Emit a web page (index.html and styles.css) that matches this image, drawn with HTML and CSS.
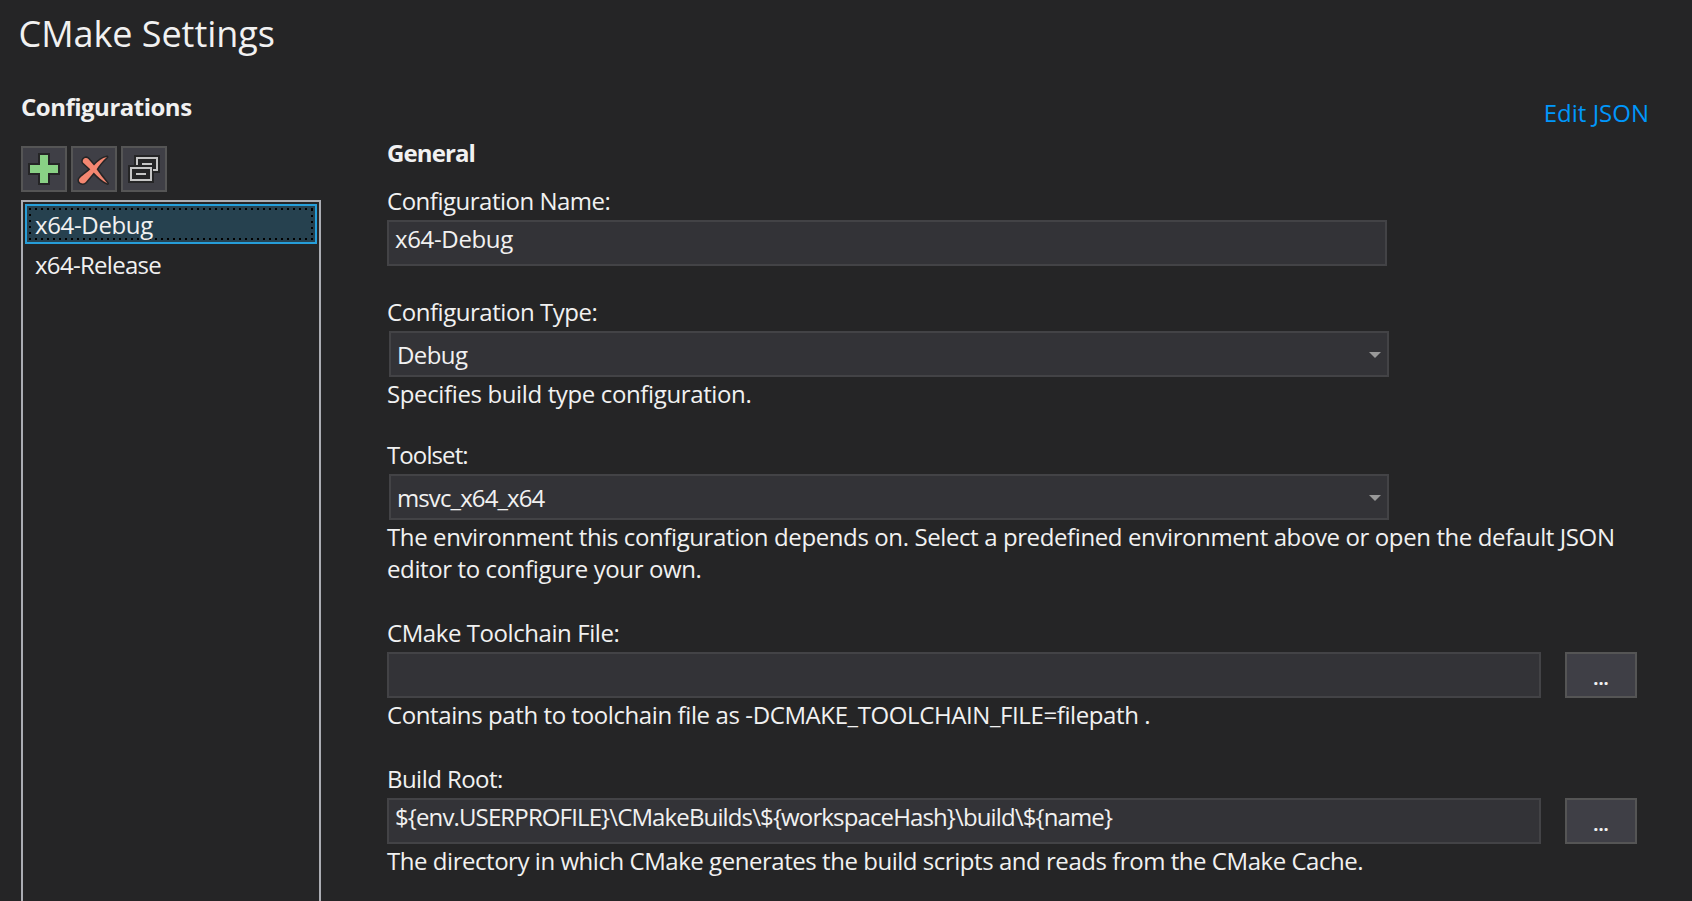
FILE: index.html
```html
<!DOCTYPE html>
<html lang="en">
<head>
<meta charset="utf-8">
<title>CMake Settings</title>
<link rel="stylesheet" href="styles.css">
</head>
<body>
<h1 class="title">CMake Settings</h1>
<div class="layout">
  <aside class="sidebar">
    <h2 class="heading heading-configs">Configurations</h2>
    <div class="toolbar">
      <button class="tool" aria-label="Add">
        <svg width="42" height="42" viewBox="0 0 42 42"><path d="M15 5h12v10h10v12H27v10H15V27H5V15h10z" fill="#252526"/><path d="M17 7h8v10h10v8H25v10h-8V25H7v-8h10z" fill="#89d185"/></svg>
      </button>
      <button class="tool" aria-label="Remove">
        <svg width="42" height="42" viewBox="0 0 42 42"><path d="M10 14.500C8.800 11 13 8.300 15.600 11.200L21 17.600C25 13.200 29 9.800 34 9C29.500 13 26 17.500 23.600 21.200C26.500 25.500 30.500 30.500 34.500 35.500C29 33 24.500 28.500 20.800 24.600L12.600 34.200C9.500 37 5 34.500 6.200 31C8 28 13.500 25 17.300 21.200Z" fill="#f48771" stroke="#252526" stroke-width="3" paint-order="stroke" stroke-linejoin="round"/></svg>
      </button>
      <button class="tool" aria-label="Duplicate">
        <svg width="42" height="42" viewBox="0 0 42 42" shape-rendering="crispEdges"><path d="M11 7h26v18h-6v10H5V17h6z" fill="#252526"/><path d="M14 17v-7h20v12h-4" fill="none" stroke="#c5c5c5" stroke-width="2"/><path d="M19 16h10" stroke="#c5c5c5" stroke-width="2"/><path d="M8 20h20v12H8z" fill="#252526" stroke="#c5c5c5" stroke-width="2"/><path d="M13 26h10" stroke="#c5c5c5" stroke-width="2"/></svg>
      </button>
    </div>
    <ul class="list">
      <li class="item item-selected">
        <svg class="focus" width="284" height="32" viewBox="0 0 284 32" shape-rendering="crispEdges"><path d="M0 1H284M0 31H284" stroke="#000" stroke-width="2" stroke-dasharray="2 4"/><path d="M1 6V30M283 1V30" stroke="#000" stroke-width="2" stroke-dasharray="2 4"/></svg>
        <span class="t-debug">x64-Debug</span>
      </li>
      <li class="item"><span class="t-release">x64-Release</span></li>
    </ul>
  </aside>
  <main class="main">
    <div class="actions"><a class="link">Edit JSON</a></div>
    <h2 class="heading heading-general">General</h2>
    <section class="field">
      <label class="label t-name">Configuration Name:</label>
      <div class="input input-short"><span class="t-debug">x64-Debug</span></div>
    </section>
    <section class="field field-type">
      <label class="label t-type">Configuration Type:</label>
      <div class="combo"><span class="t-value">Debug</span><svg width="12" height="6" viewBox="0 0 12 6"><path d="M0 0h12L6 6z" fill="#999"/></svg></div>
      <p class="hint t-spec">Specifies build type configuration.</p>
    </section>
    <section class="field field-toolset">
      <label class="label t-toolset">Toolset:</label>
      <div class="combo"><span class="t-msvc">msvc_x64_x64</span><svg width="12" height="6" viewBox="0 0 12 6"><path d="M0 0h12L6 6z" fill="#999"/></svg></div>
      <p class="hint t-env">The environment this configuration depends on. Select a predefined environment above or open the default JSON<br>editor to configure your own.</p>
    </section>
    <section class="field field-toolchain">
      <label class="label t-chain">CMake Toolchain File:</label>
      <div class="row"><div class="input input-long"></div><button class="browse">...</button></div>
      <p class="hint t-contains">Contains path to toolchain file as -DCMAKE_TOOLCHAIN_FILE=filepath .</p>
    </section>
    <section class="field field-root">
      <label class="label t-root">Build Root:</label>
      <div class="row"><div class="input input-long"><span class="t-path">${env.USERPROFILE}\CMakeBuilds\${workspaceHash}\build\${name}</span></div><button class="browse">...</button></div>
      <p class="hint t-dir">The directory in which CMake generates the build scripts and reads from the CMake Cache.</p>
    </section>
  </main>
</div>
</body>
</html>
```
FILE: styles.css
```css
* { box-sizing: border-box; }
body {
  margin: 0;
  height: 901px;
  overflow: hidden;
  display: flex;
  flex-direction: column;
  background: #252526;
  color: #f1f1f1;
  font: 24px/32px "Open Sans", "Noto Sans", sans-serif;
  white-space: nowrap;
}
h1, h2, p, ul { margin: 0; padding: 0; }
.title { padding: 10px 0 0 18.5px; font-size: 36px; line-height: 48px; font-weight: 400; letter-spacing: -.05px; }
.layout { flex: 1; min-height: 0; display: flex; gap: 66px; padding: 33px 0 0 21px; }
.sidebar { width: 300px; display: flex; flex-direction: column; }
.heading { font-size: 24px; font-weight: 700; }
.heading-configs { letter-spacing: -.5px; }
.heading-general { letter-spacing: -.9px; margin-top: 8px; }
.toolbar { display: flex; gap: 4px; margin-top: 23px; }
.tool {
  width: 46px; height: 46px; padding: 0;
  border: 2px solid #555555; background: #3f3f46;
}
.tool svg { display: block; }
.list {
  flex: 1;
  margin-top: 8px;
  padding: 2px;
  border: 2px solid #abadb3;
  border-bottom: 0;
  list-style: none;
}
.item { position: relative; height: 40px; padding: 5px 10px; }
.item-selected {
  border: 2px solid #269ed9;
  padding: 3px 8px;
  background: #26414f;
}
.focus { position: absolute; left: 2px; top: 2px; }
.item span { position: relative; }

.main { flex: 1; padding-top: 6px; }
.actions { display: flex; justify-content: flex-end; padding-right: 43px; }
.link { color: #0097fb; letter-spacing: 0; }
.field { margin-top: 16px; }
.field-type { margin-top: 30px; }
.field-toolset { margin-top: 29px; }
.field-toolchain { margin-top: 32px; }
.field-root { margin-top: 32px; }
.label { display: block; margin-bottom: 3px; }
.input, .combo { height: 46px; border: 2px solid #434346; background: #333337; }
.input { padding: 1px 6px; }
.input-short { width: 1000px; }
.input-long { width: 1154px; }
.combo {
  width: 1000px;
  margin-left: 2px;
  padding: 2px 6px 0;
  display: flex;
  align-items: center;
  justify-content: space-between;
}
.row { display: flex; gap: 24px; }
.browse {
  width: 72px; height: 46px; padding: 6px 0 0;
  border: 2px solid #555555;
  background: #3f3f46;
  color: #f1f1f1;
  font: 700 18px/24px "Open Sans", "Noto Sans", sans-serif;
}
.hint { margin-top: 1px; }

.t-debug { letter-spacing: -.35px; }
.t-release { letter-spacing: -.7px; }
.t-name { letter-spacing: -.49px; }
.t-type { letter-spacing: -.45px; }
.t-value { letter-spacing: -.57px; }
.t-spec { letter-spacing: -.37px; }
.t-toolset { letter-spacing: -.9px; }
.t-msvc { letter-spacing: -.9px; }
.t-env { letter-spacing: -.392px; }
.t-chain { letter-spacing: -.43px; }
.t-contains { letter-spacing: -.4px; }
.t-root { letter-spacing: -.55px; }
.t-path { letter-spacing: -.87px; }
.t-dir { letter-spacing: -.46px; }
```
